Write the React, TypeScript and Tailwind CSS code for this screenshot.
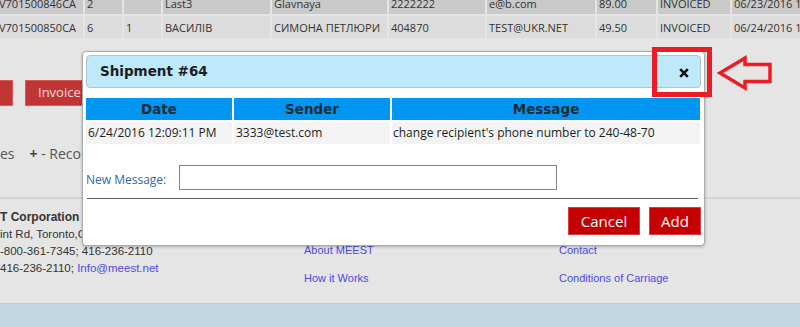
import React from "react";

const topRows = [
  { bg: "bg-[#c9c9c9]", cells: ["V701500846CA", "2", "", "Last3", "Glavnaya", "2222222", "e@b.com", "89.00", "INVOICED", "06/23/2016 12:00"] },
  { bg: "bg-[#dcdcdc]", cells: ["V701500850CA", "6", "1", "ВАСИЛІВ", "СИМОНА ПЕТЛЮРИ", "404870", "TEST@UKR.NET", "49.50", "INVOICED", "06/24/2016 12:00"] },
];

const widths = ["w-[86px] -ml-[3px]", "w-[37px]", "w-[37px]", "w-[107px]", "w-[115px]", "w-[96px]", "w-[108px]", "w-[59px]", "w-[72px]", "w-[90px]"];

export default function App() {
  return (
    <div className="relative w-[800px] h-[327px] overflow-hidden bg-[#e5e5e5] flex flex-col" style={{ fontFamily: '"Open Sans", "Noto Sans", sans-serif' }}>
      {/* top table */}
      <div className="-mt-[8px] flex flex-col gap-[2px]">
        {topRows.map((r, i) => (
          <div key={i} className="flex gap-[2px] h-[22px] shrink-0">
            {r.cells.map((c, j) => (
              <div key={j} className={`${widths[j]} ${r.bg} shrink-0 h-full flex items-center pt-[3px] pl-[2px] text-[11px] text-[#333] whitespace-nowrap overflow-hidden`}>
                {c}
              </div>
            ))}
          </div>
        ))}
      </div>

      {/* buttons row */}
      <div className="mt-[42px] h-[26px] flex shrink-0">
        <div className="w-[13px] h-full bg-[#c23535] border border-[#d65a5a] border-l-0" />
        <div className="ml-[12px] w-[90px] h-full bg-[#c23535] border border-[#d65a5a] text-[#f3dede] text-[13px] flex items-center pl-[12px]">Invoice</div>
      </div>

      {/* links row */}
      <div className="mt-[38px] h-[18px] flex items-center text-[14px] text-[#555] shrink-0 whitespace-nowrap">
        <span>es</span>
        <span className="ml-[15px]"><b className="text-[#444]">+</b> - Records</span>
      </div>

      {/* footer */}
      <div className="mt-[35px] h-[106px] shrink-0 border-t-2 border-[#d3d3d3] flex text-[11.5px] leading-[17px] text-[#333]" style={{ fontFamily: '"Liberation Sans", Arial, sans-serif' }}>
        <div className="w-[304px] pt-[10px] flex flex-col whitespace-nowrap">
          <span className="font-bold text-[12px]">T Corporation</span>
          <span>int Rd, Toronto,ON</span>
          <span>-800-361-7345; 416-236-2110</span>
          <span>
            416-236-2110; <span className="text-[#4b4be6]">Info@meest.net</span>
          </span>
        </div>
        <div className="w-[255px] pt-[43px] flex flex-col gap-[11px] text-[11px] text-[#4b4be6]">
          <span>About MEEST</span>
          <span>How it Works</span>
        </div>
        <div className="pt-[43px] flex flex-col gap-[11px] text-[11px] text-[#4b4be6]">
          <span>Contact</span>
          <span>Conditions of Carriage</span>
        </div>
      </div>
      <div className="flex-1 border-t border-[#cbcbcb] bg-[#c3d7e3]" />

      {/* modal */}
      <div className="absolute left-[82px] top-[51px] w-[623px] bg-white border border-[#ababab] rounded-[4px] p-[3px] pb-[10px] shadow-[0_1px_3px_rgba(0,0,0,0.25)]">
        <div className="h-[33px] bg-[#bde9fb] border border-[#a9c6d2] rounded-[4px] flex items-center justify-between pl-[13px] pr-[11px]">
          <span className="text-[13.5px] font-bold text-[#1c1c1c]" style={{ fontFamily: '"DejaVu Sans", Verdana, sans-serif' }}>Shipment #64</span>
          <svg width="10" height="10" viewBox="0 0 10 10" className="mt-[2px]">
            <path d="M1.2 1.2 L8.8 8.8 M8.8 1.2 L1.2 8.8" stroke="#111" strokeWidth="2.6" strokeLinecap="butt" />
          </svg>
        </div>
        <div className="mt-[10px] flex flex-col gap-[2px] pr-[1px]">
          <div className="flex gap-[2px] h-[22px] text-[13.5px] font-bold text-[#1f2a33]" style={{ fontFamily: '"DejaVu Sans", Verdana, sans-serif' }}>
            <div className="w-[146px] bg-[#0096f2] flex items-center justify-center">Date</div>
            <div className="w-[156px] bg-[#0096f2] flex items-center justify-center">Sender</div>
            <div className="flex-1 bg-[#0096f2] flex items-center justify-center">Message</div>
          </div>
          <div className="flex gap-[2px] h-[22px] text-[12px] text-[#1e1e1e]">
            <div className="w-[146px] bg-[#f3f3f3] flex items-center pl-[2px]">6/24/2016 12:09:11 PM</div>
            <div className="w-[156px] bg-[#f3f3f3] flex items-center pl-[2px]">3333@test.com</div>
            <div className="flex-1 bg-[#f3f3f3] flex items-center pl-[1px]">change recipient's phone number to 240-48-70</div>
          </div>
        </div>
        <div className="mt-[21px] flex items-center h-[25px]">
          <span className="w-[93px] text-[12px] text-[#2a6ab5] pt-[5px]">New Message:</span>
          <div className="w-[378px] h-[25px] border border-[#858585] bg-white" />
        </div>
        <div className="mt-[8px] mx-[1px] mr-[3px] border-t-[1.5px] border-[#5a5a5a]" />
        <div className="mt-[8px] flex justify-end gap-[9px]">
          <div className="w-[72px] h-[28px] bg-[#c40000] border border-[#d84040] text-white text-[15px] flex items-center justify-center">Cancel</div>
          <div className="w-[52px] h-[28px] bg-[#c40000] border border-[#d84040] text-white text-[15px] flex items-center justify-center">Add</div>
        </div>
      </div>

      {/* annotation */}
      <div className="absolute left-[652px] top-[47px] w-[60px] h-[50px] border-[5px] border-[#ed1c24]" />
      <svg className="absolute left-[715px] top-[52px]" width="60" height="44" viewBox="0 0 60 44">
        <polygon points="5,21 30,6 30,12.5 55,12.5 55,29.5 30,29.5 30,36" fill="none" stroke="#ed1c24" strokeWidth="3.5" strokeLinejoin="miter" />
      </svg>
    </div>
  );
}
